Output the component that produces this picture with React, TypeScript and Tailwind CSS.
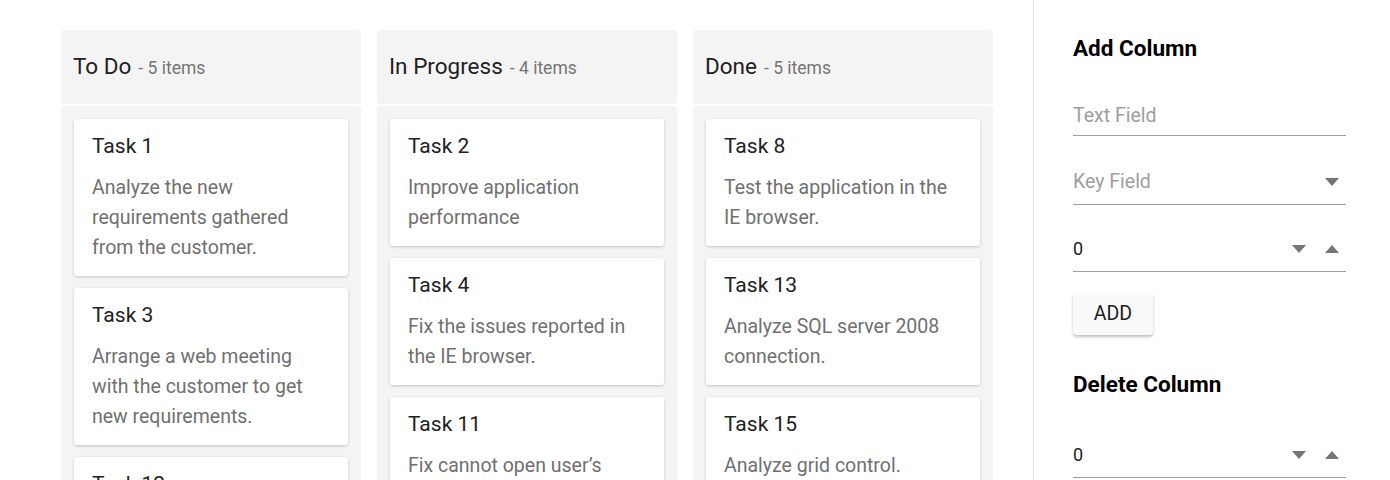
const columns = [
  {
    title: "To Do",
    count: 5,
    cards: [
      { title: "Task 1", text: "Analyze the new requirements gathered from the customer." },
      { title: "Task 3", text: "Arrange a web meeting with the customer to get new requirements." },
      { title: "Task 12", text: "Show the retrieved data from the server in grid control." },
    ],
  },
  {
    title: "In Progress",
    count: 4,
    cards: [
      { title: "Task 2", text: "Improve application performance" },
      { title: "Task 4", text: "Fix the issues reported in the IE browser." },
      { title: "Task 11", text: "Fix cannot open user’s default database sql error." },
    ],
  },
  {
    title: "Done",
    count: 5,
    cards: [
      { title: "Task 8", text: "Test the application in the IE browser." },
      { title: "Task 13", text: "Analyze SQL server 2008 connection." },
      { title: "Task 15", text: "Analyze grid control." },
    ],
  },
];

const Caret = ({ up = false }: { up?: boolean }) => (
  <svg width="14" height="8" viewBox="0 0 14 8" className="fill-[#757575]">
    {up ? <path d="M0 8 L7 0 L14 8 Z" /> : <path d="M0 0 L14 0 L7 8 Z" />}
  </svg>
);

const Numeric = () => (
  <div className="flex items-center h-[46px] border-b border-[#9e9e9e] text-[18px] text-[#212121]">
    <span className="flex-1">0</span>
    <div className="flex items-center gap-[19px] pr-[7px]">
      <Caret />
      <Caret up />
    </div>
  </div>
);

export default function App() {
  return (
    <div className="flex h-[480px] overflow-hidden bg-white font-['Roboto',sans-serif]">
      <div className="flex gap-4 pl-[61px] pt-[30px] pr-10">
        {columns.map((col) => (
          <div key={col.title} className="w-[300px] flex flex-col gap-[2px]">
            <div className="shrink-0 h-[74px] bg-[#f4f4f4] rounded flex items-center px-3 gap-[7px]">
              <span className="text-[22.5px] text-[#212121]">{col.title}</span>
              <span className="text-[17.5px] text-[#757575] mt-[2px]">- {col.count} items</span>
            </div>
            <div className="flex-1 bg-[#f4f4f4] rounded-t px-[13px] pt-[13px] flex flex-col gap-3">
              {col.cards.map((card) => (
                <div
                  key={card.title}
                  className="shrink-0 bg-white rounded-[3px] shadow-[0_1px_3px_rgba(0,0,0,0.2)] px-[18px] pt-3 pb-[13px]"
                >
                  <div className="text-[21px] leading-[30px] text-[#212121]">{card.title}</div>
                  <div className="mt-3 text-[19.5px] leading-[30px] text-[#707070]">{card.text}</div>
                </div>
              ))}
            </div>
          </div>
        ))}
      </div>
      <div className="flex-1 border-l border-[#e0e0e0] pl-[39px] pr-[44px] pt-[33px]">
        <h2 className="text-[22.5px] font-bold text-black leading-[30px]">Add Column</h2>
        <div className="mt-[33px] h-[40px] flex items-center border-b border-[#9e9e9e] text-[19.5px] text-[#9e9e9e]">
          Text Field
        </div>
        <div className="mt-[23px] h-[46px] flex items-center border-b border-[#9e9e9e] text-[19.5px] text-[#9e9e9e]">
          <span className="flex-1">Key Field</span>
          <span className="pr-[7px]">
            <Caret />
          </span>
        </div>
        <div className="mt-[21px]">
          <Numeric />
        </div>
        <button className="mt-[21px] w-[80px] h-[42px] bg-[#fafafa] rounded shadow-[0_2px_3px_rgba(0,0,0,0.25)] text-[19.5px] text-[#212121]">
          ADD
        </button>
        <h2 className="mt-[34px] text-[22.5px] font-bold text-black leading-[30px]">Delete Column</h2>
        <div className="mt-[33px]">
          <Numeric />
        </div>
      </div>
    </div>
  );
}
